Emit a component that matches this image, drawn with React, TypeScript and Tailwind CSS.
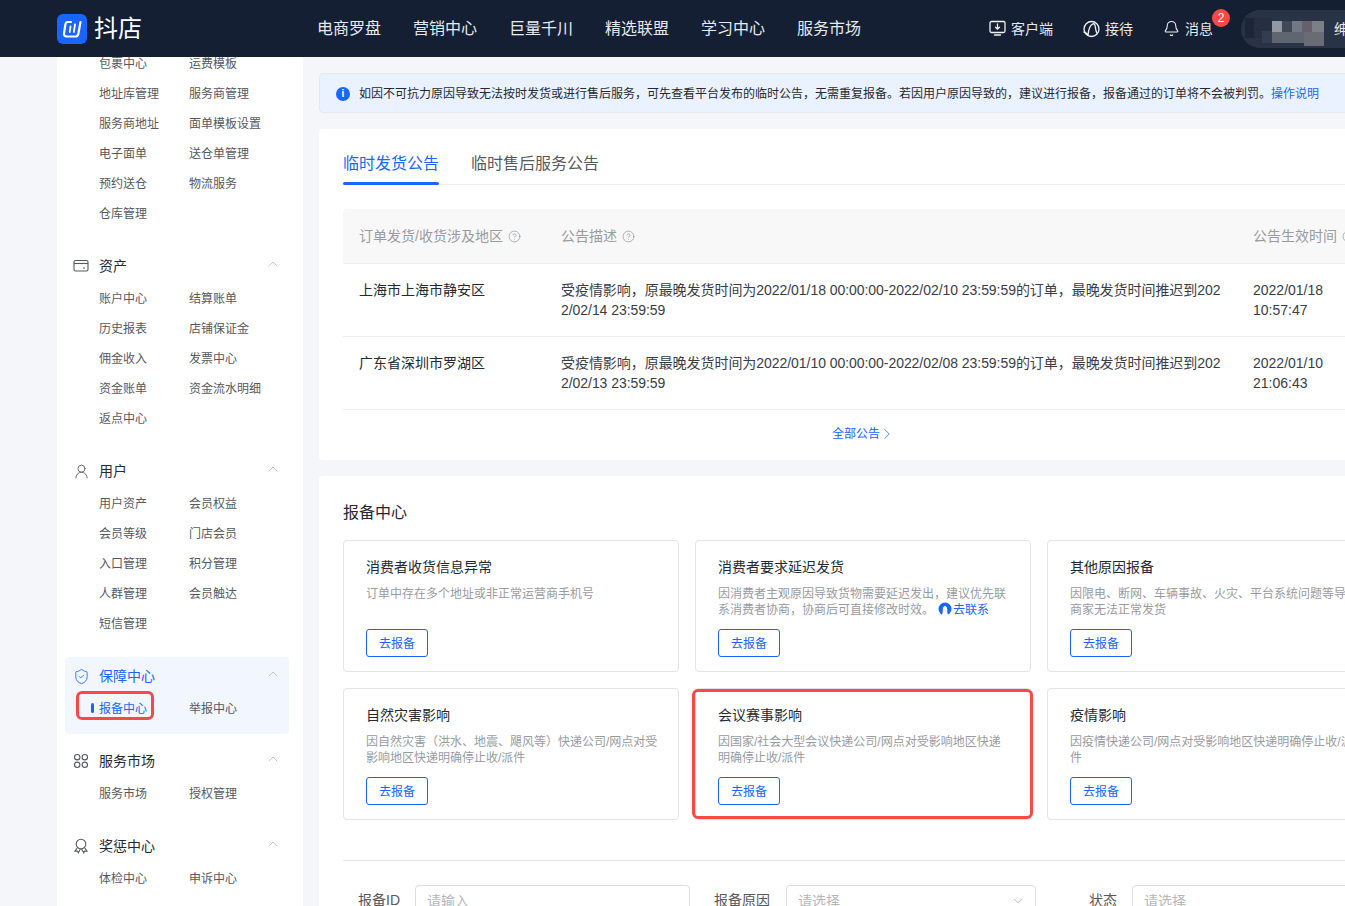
import React from "react";
import { Bell, ChevronDown, ChevronRight, ChevronUp, CircleHelp, ShieldCheck, UserRound } from "lucide-react";

const Wallet = () => (
  <svg width="16" height="16" viewBox="0 0 16 16" fill="none" stroke="#565960" strokeWidth="1.1">
    <rect x="1" y="2.5" width="14" height="10.5" rx="1.5" />
    <path d="M1 5.500h14" />
    <path d="M10 10h2" />
  </svg>
);
const Clover = () => (
  <svg width="16" height="16" viewBox="0 0 16 16" fill="none" stroke="#565960" strokeWidth="1.1">
    <circle cx="4.200" cy="4.200" r="2.700" />
    <circle cx="11.800" cy="4.200" r="2.700" />
    <circle cx="4.200" cy="11.800" r="2.700" />
    <circle cx="11.800" cy="11.800" r="2.700" />
  </svg>
);
const Medal = () => (
  <svg width="16" height="16" viewBox="0 0 16 16" fill="none" stroke="#565960" strokeWidth="1.1">
    <circle cx="8" cy="6" r="4.800" />
    <path d="M4.500 9.500 2 13.200l2.400-.2.900 1.800L7.400 11M11.500 9.500 14 13.200l-2.400-.2-.9 1.800L8.600 11" />
  </svg>
);
const MonitorIcon = () => (
  <svg width="17" height="17" viewBox="0 0 17 17" fill="none" stroke="#f0f1f3" strokeWidth="1.300" className="mr-[5px] shrink-0">
    <rect x="1" y="1.500" width="15" height="11" rx="1.500" />
    <path d="M8.500 4v5M6.500 7.200l2 2 2-2M5.500 15h6" strokeLinecap="round" />
  </svg>
);
const Headset = () => (
  <svg width="18" height="18" viewBox="0 0 18 18" fill="none" stroke="#f0f1f3" strokeWidth="1.300" className="shrink-0">
    <circle cx="9.500" cy="9" r="7.500" />
    <path d="M1.500 12c2 .2 3.500 1.500 4.500 3.500M6 15.500C6.300 11 8 5 11 3.800c1.500-.3 2 1 2.300 3 .3 2.500 1 5 1.700 6.700" />
  </svg>
);
const Logo = () => (
  <svg width="30" height="30" viewBox="0 0 30 30" className="shrink-0">
    <rect width="30" height="30" rx="6" fill="#1966ff" />
    <path d="M14 8H11C9.500 8 8.600 9 8.400 10.400L7 19.500C6.800 21.500 8 22.500 9.500 22.500H18.500C20 22.500 21 21.500 21.300 20L23.500 8" fill="none" stroke="#fff" strokeWidth="2.200" strokeLinecap="round" />
    <path d="M13.500 12.500l-.8 5.500M18 10.500l-1.100 7.500" stroke="#fff" strokeWidth="1.800" strokeLinecap="round" />
  </svg>
);
const Mosaic = () => (
  <svg width="92" height="38" viewBox="0 0 92 38" className="shrink-0">
    <rect x="3" y="8" width="9" height="20" fill="#1d2638" />
    <rect x="12" y="8" width="18" height="20" fill="#262f42" />
    <rect x="20" y="21" width="10" height="12" fill="#343d4f" />
    <rect x="30" y="11" width="10" height="11" fill="#9298a3" />
    <rect x="30" y="22" width="32" height="11" fill="#5f6672" />
    <rect x="40" y="11" width="10" height="11" fill="#3f4859" />
    <rect x="50" y="11" width="10" height="11" fill="#707785" />
    <rect x="60" y="11" width="10" height="11" fill="#665f6c" />
    <rect x="70" y="11" width="12" height="11" fill="#7b7f88" />
    <rect x="62" y="22" width="20" height="14" fill="#696c74" />
  </svg>
);
const Contact = () => (
  <svg width="14" height="14" viewBox="0 0 14 14" className="mr-px inline-block align-[-2px]">
    <circle cx="7" cy="7" r="6.500" fill="#1966ff" />
    <path d="M3.500 14c1-2 1.300-4 1.300-6.500C4.800 5.500 5.800 4 7 4s2.200 1.500 2.200 3.500c0 2.500.3 4.500 1.300 6.500z" fill="#fff" />
  </svg>
);

type Group = {
  title?: string;
  icon?: React.ReactNode;
  rows: string[];
  active?: boolean;
};

const groups: Group[] = [
  { rows: ["包裹中心", "运费模板", "地址库管理", "服务商管理", "服务商地址", "面单模板设置", "电子面单", "送仓单管理", "预约送仓", "物流服务", "仓库管理"] },
  { title: "资产", icon: <Wallet />, rows: ["账户中心", "结算账单", "历史报表", "店铺保证金", "佣金收入", "发票中心", "资金账单", "资金流水明细", "返点中心"] },
  { title: "用户", icon: <UserRound size={17} strokeWidth={1.2} color="#565960" />, rows: ["用户资产", "会员权益", "会员等级", "门店会员", "入口管理", "积分管理", "人群管理", "会员触达", "短信管理"] },
  { title: "保障中心", icon: <ShieldCheck size={17} strokeWidth={1.2} color="#1966ff" />, rows: ["报备中心", "举报中心"], active: true },
  { title: "服务市场", icon: <Clover />, rows: ["服务市场", "授权管理"] },
  { title: "奖惩中心", icon: <Medal />, rows: ["体检中心", "申诉中心"] },
];

const SideGroup = ({ g, first }: { g: Group; first: boolean }) => (
  <div className={`mb-2 ml-2 mr-[14px] rounded pb-[11px] ${g.active ? "bg-[#f2f6ff]" : ""} ${first ? "-mt-[9px]" : "pt-2"}`}>
    {g.title && (
      <div className="mb-[6px] flex h-[22px] items-center pr-2">
        <span className="flex w-[34px] justify-center pr-[2px]">{g.icon}</span>
        <span className={`flex-1 text-sm ${g.active ? "text-[#1966ff]" : "text-[#252931]"}`}>{g.title}</span>
        <ChevronUp size={16} strokeWidth={1} color="#a9adb5" className="-translate-y-[2px]" />
      </div>
    )}
    <div className="grid grid-cols-[90px_90px] pl-[34px]">
      {g.rows.map((r, i) => {
        const on = g.active && i === 0;
        return (
          <div key={r} className={`relative flex h-[30px] items-center whitespace-nowrap pt-[2px] text-xs ${on ? "text-[#1966ff]" : "text-[#565960]"}`}>
            {on && <span className="absolute -left-2 top-[10px] h-[10px] w-[3px] rounded-sm bg-[#1966ff]" />}
            {on && <span className="absolute -left-[23px] top-[-2px] h-[29px] w-[78px] rounded-md border-[3px] border-[#f54a45]" />}
            {r}
          </div>
        );
      })}
    </div>
  </div>
);

const rows = [
  {
    area: "上海市上海市静安区",
    desc: "受疫情影响，原最晚发货时间为2022/01/18 00:00:00-2022/02/10 23:59:59的订单，最晚发货时间推迟到2022/02/14 23:59:59",
    time: "2022/01/18 10:57:47",
  },
  {
    area: "广东省深圳市罗湖区",
    desc: "受疫情影响，原最晚发货时间为2022/01/10 00:00:00-2022/02/08 23:59:59的订单，最晚发货时间推迟到2022/02/13 23:59:59",
    time: "2022/01/10 21:06:43",
  },
];

const reports: { title: string; desc: string; contact?: boolean; marked?: boolean }[] = [
  { title: "消费者收货信息异常", desc: "订单中存在多个地址或非正常运营商手机号" },
  { title: "消费者要求延迟发货", desc: "因消费者主观原因导致货物需要延迟发出，建议优先联系消费者协商，协商后可直接修改时效。", contact: true },
  { title: "其他原因报备", desc: "因限电、断网、车辆事故、火灾、平台系统问题等导致商家无法正常发货" },
  { title: "自然灾害影响", desc: "因自然灾害（洪水、地震、飓风等）快递公司/网点对受影响地区快递明确停止收/派件" },
  { title: "会议赛事影响", desc: "因国家/社会大型会议快递公司/网点对受影响地区快递明确停止收/派件", marked: true },
  { title: "疫情影响", desc: "因疫情快递公司/网点对受影响地区快递明确停止收/派件" },
];

const HeadCell = ({ text, className }: { text: string; className?: string }) => (
  <div className={`flex items-center gap-[5px] whitespace-nowrap px-4 text-sm text-[#999ba0] ${className ?? ""}`}>
    {text}
    <CircleHelp size={13} strokeWidth={1.2} color="#85888e" />
  </div>
);

export default function App() {
  return (
    <div className="flex h-[906px] w-[1345px] flex-col overflow-hidden bg-[#f5f6fa] font-['Liberation_Sans','Noto_Sans_CJK_SC',sans-serif]">
      <header className="flex h-[57px] shrink-0 items-center bg-[#141f33] text-[#e8eaee]">
        <div className="flex w-[317px] shrink-0 items-center gap-[7px] pl-[57px]">
          <Logo />
          <span className="text-2xl leading-none text-white">抖店</span>
        </div>
        <nav className="flex w-[672px] shrink-0 gap-8 text-base">
          {["电商罗盘", "营销中心", "巨量千川", "精选联盟", "学习中心", "服务市场"].map((n) => (
            <span key={n}>{n}</span>
          ))}
        </nav>
        <div className="flex shrink-0 items-center whitespace-nowrap text-sm">
          <MonitorIcon />
          <span className="mr-[29px]">客户端</span>
          <Headset />
          <span className="ml-[5px] mr-[30px]">接待</span>
          <Bell size={17} strokeWidth={1.5} color="#f0f1f3" className="mr-[5px] shrink-0" />
          <span className="relative mr-[28px]">
            消息
            <span className="absolute -top-[10px] left-[27px] flex h-[18px] w-[18px] items-center justify-center rounded-full bg-[#f54a45] text-xs leading-none text-white">2</span>
          </span>
          <div className="flex h-[38px] w-[150px] shrink-0 items-center rounded-l-full bg-[#283346] pl-[1px]">
            <Mosaic />
            <span>绅</span>
          </div>
        </div>
      </header>

      <div className="flex min-h-0 flex-1 pl-[57px]">
        <aside className="h-full w-[246px] shrink-0 overflow-hidden bg-white">
          {groups.map((g, i) => (
            <SideGroup key={i} g={g} first={i === 0} />
          ))}
        </aside>

        <main className="flex w-[1084px] shrink-0 flex-col gap-4 pl-4 pt-4">
          <div className="flex h-10 w-[1084px] shrink-0 items-center whitespace-nowrap rounded border border-[#e6e9f0] bg-[#ebf2ff] pl-4 pt-[2px] text-xs text-[#252931]">
            <span className="mr-[9px] flex h-[14px] w-[14px] items-center justify-center rounded-full bg-[#1966ff] text-[10px] font-bold leading-none text-white">i</span>
            如因不可抗力原因导致无法按时发货或进行售后服务，可先查看平台发布的临时公告，无需重复报备。若因用户原因导致的，建议进行报备，报备通过的订单将不会被判罚。
            <span className="text-[#1966ff]">操作说明</span>
          </div>

          <section className="w-[1084px] shrink-0 rounded bg-white px-6 pb-1 pt-4">
            <div className="flex h-10 gap-8 border-b border-[#eceef1] text-base">
              <div className="relative leading-[38px] text-[#1966ff]">
                临时发货公告
                <span className="absolute -bottom-px left-0 h-[3px] w-full rounded-sm bg-[#1966ff]" />
              </div>
              <div className="leading-[38px] text-[#565960]">临时售后服务公告</div>
            </div>

            <div className="mt-6 grid grid-cols-[202px_692px_142px] text-sm text-[#252931]">
              <HeadCell text="订单发货/收货涉及地区" className="h-[55px] rounded-tl border-b border-[#eceef1] bg-[#f8f8f8]" />
              <HeadCell text="公告描述" className="h-[55px] border-b border-[#eceef1] bg-[#f8f8f8]" />
              <HeadCell text="公告生效时间" className="h-[55px] rounded-tr border-b border-[#eceef1] bg-[#f8f8f8]" />
              {rows.map((r) => (
                <React.Fragment key={r.area}>
                  <div className="h-[73px] border-b border-[#eceef1] p-4 leading-5">{r.area}</div>
                  <div className="h-[73px] break-all border-b border-[#eceef1] py-4 pl-4 pr-3 leading-5 tracking-[-0.05px] text-[#3a3d44]">{r.desc}</div>
                  <div className="h-[73px] border-b border-[#eceef1] py-4 pl-4 pr-9 leading-5 text-[#3a3d44]">{r.time}</div>
                </React.Fragment>
              ))}
            </div>

            <div className="flex h-[46px] items-center justify-center pl-[6px] pt-[2px] text-xs text-[#1966ff]">
              全部公告
              <ChevronRight size={18} strokeWidth={1} className="-ml-[2px]" />
            </div>
          </section>

          <section className="w-[1084px] shrink-0 rounded bg-white px-6 pt-6">
            <h2 className="h-6 text-base leading-[26px] text-[#252931]">报备中心</h2>
            <div className="mt-4 grid grid-cols-[336px_336px_336px] gap-4">
              {reports.map((c) => (
                <div key={c.title} className="relative flex h-[132px] flex-col rounded border border-[#e3e4e6] pl-[22px] pr-5 pt-4">
                  {c.marked && <span className="absolute -left-[4px] top-0 h-[130px] w-[341px] rounded-md border-[3px] border-[#f54a45]" />}
                  <h3 className="text-sm leading-5 text-[#252931]">{c.title}</h3>
                  <p className="mt-[9px] h-8 text-xs leading-4 text-[#999ba0]">
                    {c.desc}
                    {c.contact && (
                      <span className="ml-1 text-[#1966ff]">
                        <Contact />
                        去联系
                      </span>
                    )}
                  </p>
                  <button className="mt-[11px] h-7 w-[62px] rounded-[3px] border border-[#1966ff] pt-[2px] text-xs text-[#1966ff]">去报备</button>
                </div>
              ))}
            </div>
            <div className="mt-10 border-t border-[#e3e4e6] pt-6 text-sm text-[#565960]">
              <div className="flex items-start whitespace-nowrap leading-[30px]">
                <span className="ml-[15px] w-[57px]">报备ID</span>
                <div className="h-8 w-[275px] rounded border border-[#dcdde0] pl-[11px] text-[#b5b7bb]">请输入</div>
                <span className="ml-6 w-[72px]">报备原因</span>
                <div className="flex h-8 w-[250px] justify-between rounded border border-[#dcdde0] pl-[11px] pr-[10px] text-[#b5b7bb]">
                  请选择
                  <ChevronDown size={14} strokeWidth={1.1} className="mt-2" color="#85888e" />
                </div>
                <span className="ml-[53px] w-[43px]">状态</span>
                <div className="h-8 w-[247px] rounded border border-[#dcdde0] pl-[11px] text-[#b5b7bb]">请选择</div>
              </div>
            </div>
          </section>
        </main>
      </div>
    </div>
  );
}
